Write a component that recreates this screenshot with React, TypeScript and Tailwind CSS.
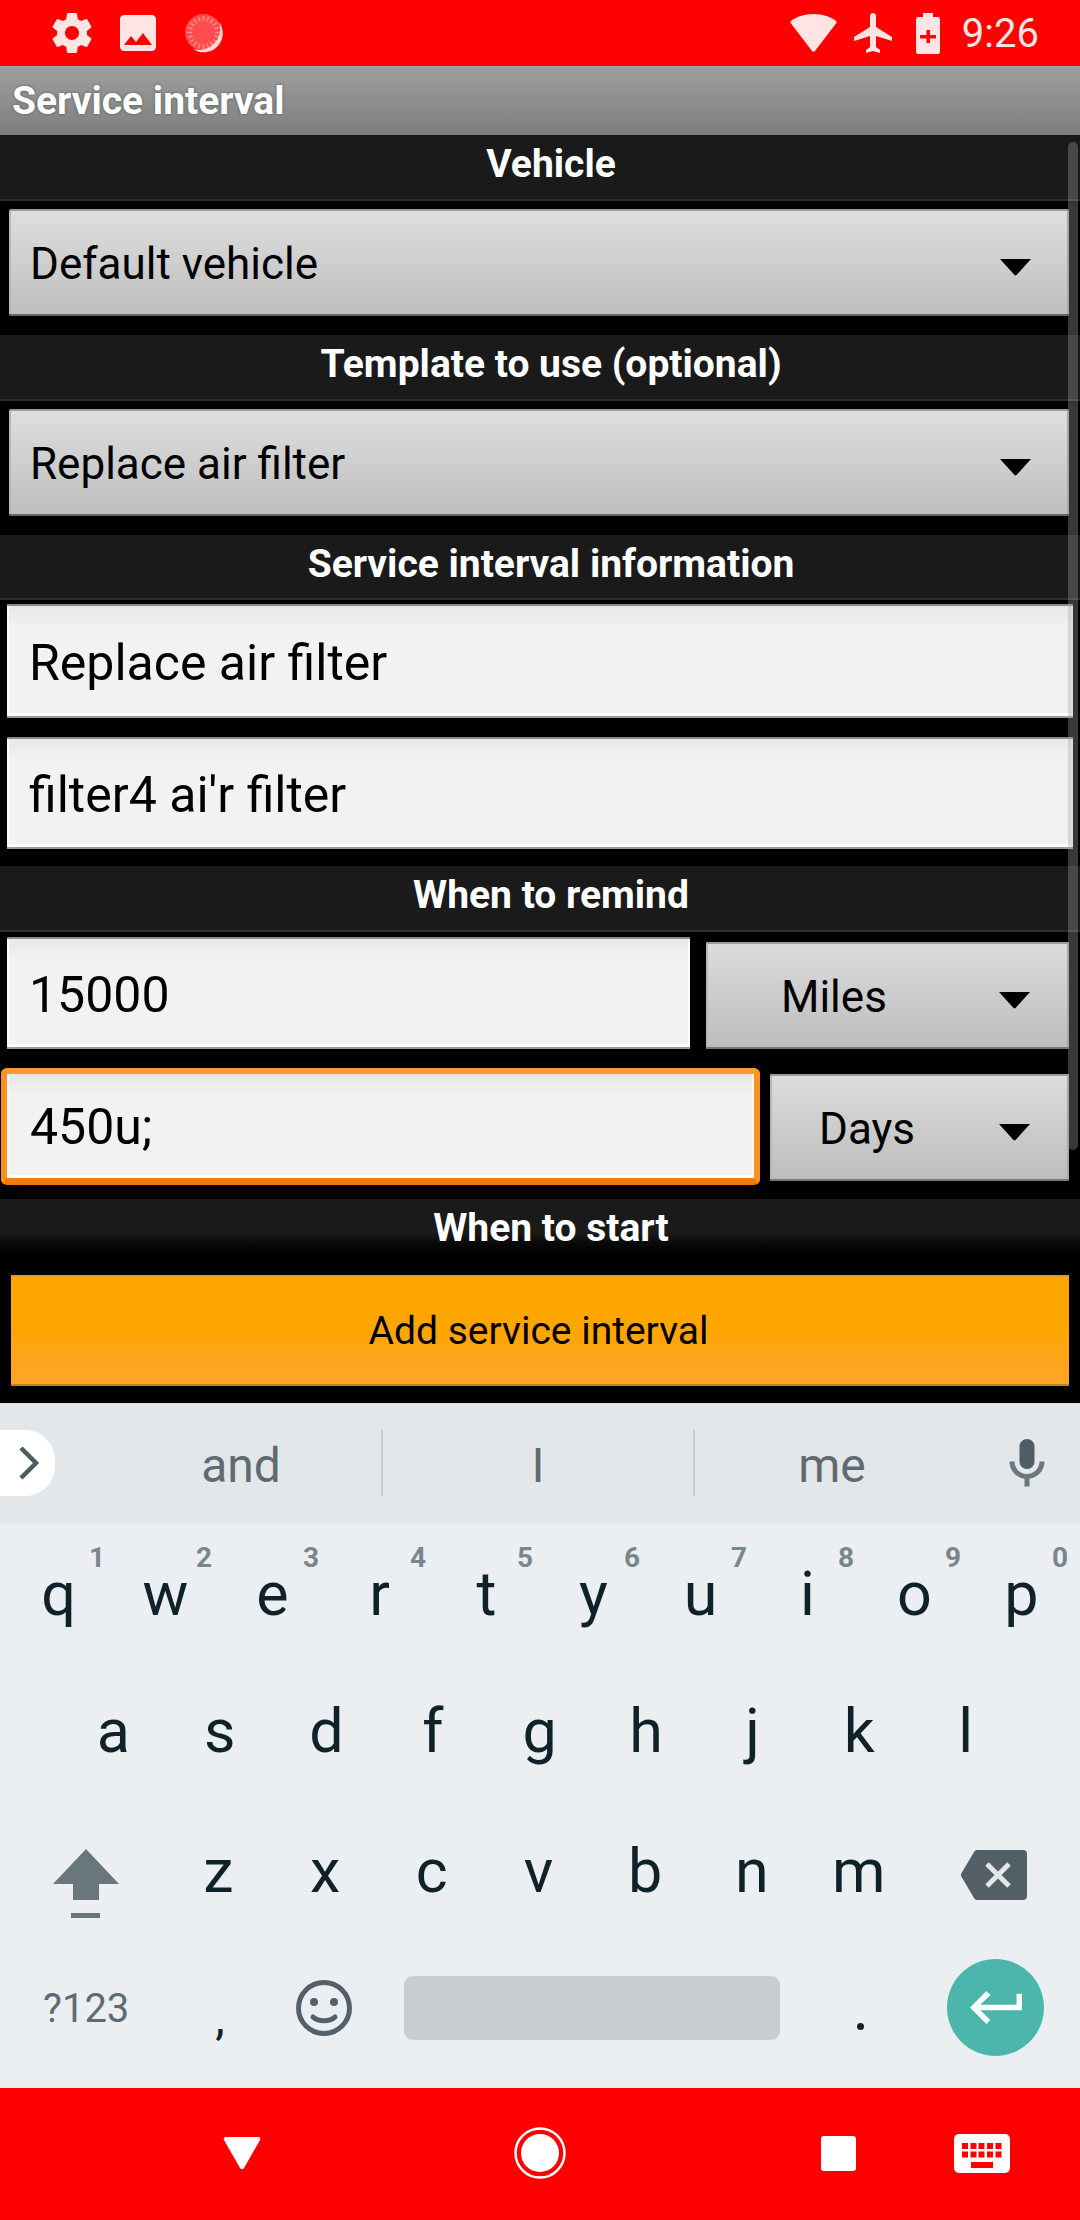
import React from "react";

const font = { fontFamily: "Roboto, sans-serif" };

function Arrow() {
  return (
    <svg width="33" height="18" viewBox="0 0 33 18" className="block shrink-0 mt-[6px]">
      <path d="M1 1h31L17.500 17a1.500 1.500 0 0 1-2 0z" fill="#000" />
    </svg>
  );
}

function Header({ title, h = "h-[66px]", extra = "" }: { title: string; h?: string; extra?: string }) {
  return (
    <div className={`${h} ${extra} w-full flex justify-center pl-[22px] pt-[8px] text-white font-bold text-[39px] leading-[42px]`}>
      {title}
    </div>
  );
}

function WideSelect({ label }: { label: string }) {
  return (
    <div className="ml-[9px] w-[1060px] h-[107px] flex items-center justify-between pl-[21px] pr-[37px] pt-[3px] text-[44px] text-black bg-gradient-to-b from-[#dedede] to-[#bfbfbf] border-y-2 border-t-[#9a9a9a] border-b-[#666666] rounded-[2px] shadow-[inset_-2px_0_0_#a8a8a8,inset_2px_0_0_#b8b8b8]">
      <span>{label}</span>
      <Arrow />
    </div>
  );
}

const inputCls =
  "flex items-center pl-[22px] pt-[4px] text-[50px] text-black bg-[linear-gradient(#e8e8e8,#f2f2f2_22px)] border-t-2 border-t-[#8a8a8a] border-b-2 border-b-[#9a9a9a] shadow-[inset_2px_0_0_#fbfbfb,inset_-2px_0_0_#fbfbfb,inset_0_-3px_0_#ffffff]";

function Input({ value, w, h = "h-[112px]" }: { value: string; w: string; h?: string }) {
  return <div className={`${w} ${h} ${inputCls}`}>{value}</div>;
}

function SmallSelect({ label, w, pl, h }: { label: string; w: string; pl: string; h: string }) {
  return (
    <div className={`${w} ${h} ${pl} flex items-center justify-between pr-[38px] pt-[3px] text-[44px] text-black bg-gradient-to-b from-[#dcdcdc] to-[#bdbdbd] border-y-2 border-t-[#9c9c9c] border-b-[#777777] shadow-[inset_-2px_0_0_#a8a8a8,inset_2px_0_0_#b8b8b8]`}>
      <span>{label}</span>
      <Arrow />
    </div>
  );
}

function Key({ k, n }: { k: string; n?: string }) {
  return (
    <div className="relative flex-1 flex justify-center text-[61px] leading-[70px] text-[#0f2129]">
      {k}
      {n && (
        <span className="absolute right-[7px] top-[-17px] text-[28px] leading-[32px] font-bold text-[#7a868d]">{n}</span>
      )}
    </div>
  );
}

const ticks = Array.from({ length: 20 }, (_, i) => (i * 360) / 20);

export default function App() {
  const row1 = ["q", "w", "e", "r", "t", "y", "u", "i", "o", "p"];
  const nums = ["1", "2", "3", "4", "5", "6", "7", "8", "9", "0"];
  return (
    <div style={font} className="relative w-[1080px] h-[2220px] overflow-hidden bg-black flex flex-col">
      {/* status bar */}
      <div className="h-[66px] bg-[#ff0000] flex items-center shrink-0 text-[#ffe4e4]">
        <svg width="48" height="48" viewBox="0 0 24 24" fill="currentColor" className="ml-[48px]">
          <path d="M19.43 12.98c.04-.32.07-.64.07-.98s-.03-.66-.07-.98l2.11-1.65c.19-.15.24-.42.12-.64l-2-3.46c-.12-.22-.39-.3-.61-.22l-2.49 1c-.52-.4-1.08-.73-1.69-.98l-.38-2.65C14.46 2.18 14.25 2 14 2h-4c-.25 0-.46.18-.49.42l-.38 2.65c-.61.25-1.17.59-1.69.98l-2.49-1c-.23-.09-.49 0-.61.22l-2 3.46c-.13.22-.07.49.12.64l2.11 1.65c-.04.32-.07.65-.07.98s.03.66.07.98l-2.11 1.65c-.19.15-.24.42-.12.64l2 3.46c.12.22.39.3.61.22l2.49-1c.52.4 1.08.73 1.69.98l.38 2.65c.03.24.24.42.49.42h4c.25 0 .46-.18.49-.42l.38-2.65c.61-.25 1.17-.59 1.69-.98l2.49 1c.23.09.49 0 .61-.22l2-3.46c.12-.22.07-.49-.12-.64l-2.11-1.65zM12 15.5c-1.93 0-3.5-1.57-3.5-3.5s1.57-3.5 3.5-3.5 3.5 1.57 3.5 3.5-1.57 3.5-3.5 3.5z" />
        </svg>
        <svg width="48" height="48" viewBox="0 0 24 24" fill="currentColor" className="ml-[18px]">
          <path d="M21 19V5c0-1.100-.9-2-2-2H5c-1.100 0-2 .9-2 2v14c0 1.100.9 2 2 2h14c1.100 0 2-.9 2-2zM8.500 13.500l2.500 3.010L14.500 12l4.500 6H5l3.500-4.500z" />
        </svg>
        <svg width="40" height="40" viewBox="0 0 40 40" className="ml-[22px]">
          <circle cx="19.5" cy="19.5" r="18.5" fill="#ff4d4d" />
          {ticks.map((a) => (
            <line key={a} x1="19.5" y1="3" x2="19.5" y2="8" stroke="#ff8f8f" strokeWidth="1.5" transform={`rotate(${a} 19.5 19.5)`} />
          ))}
          <path d="M35 9a19 19 0 0 1-26 27a21 21 0 0 0 26-27z" fill="#ffd6d6" />
        </svg>
        <div className="flex-1" />
        <svg width="47" height="38" viewBox="0 0 47 38" fill="currentColor">
          <path d="M23.5 0C33 0 41 3 46 7q1 1 0 2.500L25 37q-1.500 1.500-3 0L1 9.500Q0 8 1 7C6 3 14 0 23.500 0z" />
        </svg>
        <svg width="48" height="48" viewBox="0 0 24 24" fill="currentColor" className="ml-[13px]">
          <path d="M21 16v-2l-8-5V3.500c0-.83-.67-1.500-1.500-1.500S10 2.670 10 3.500V9l-8 5v2l8-2.500V19l-2 1.500V22l3.500-1 3.500 1v-1.500L13 19v-5.500l8 2.500z" />
        </svg>
        <svg width="24" height="41" viewBox="0 0 24 41" className="ml-[18px]">
          <path d="M7 0h10v4h5a2 2 0 0 1 2 2v33a2 2 0 0 1-2 2H2a2 2 0 0 1-2-2V6a2 2 0 0 1 2-2h5z" fill="currentColor" />
          <path d="M10.500 17h3.500v5h6v3.500h-6V30h-3.500v-4.500H4V22h6.500z" fill="#ff0000" />
        </svg>
        <span className="ml-[22px] mr-[41px] pt-[2px] text-[40px] leading-none">9:26</span>
      </div>

      {/* title bar */}
      <div className="h-[69px] shrink-0 pl-[12px] pt-[14px] bg-gradient-to-b from-[#a0a0a0] to-[#7e7e7e] text-white font-bold text-[39px] leading-[42px] [text-shadow:0_0_3px_#555]">
        Service interval
      </div>

      {/* form */}
      <div className="h-[1268px] shrink-0 flex flex-col">
        <Header title="Vehicle" extra="bg-[#1a1a1a] border-b-2 border-[#2e2e2e]" />
        <div className="mt-[8px]">
          <WideSelect label="Default vehicle" />
        </div>
        <div className="mt-[19px]">
          <Header title="Template to use (optional)" extra="bg-[#1a1a1a] border-b-2 border-[#2e2e2e]" />
        </div>
        <div className="mt-[8px]">
          <WideSelect label="Replace air filter" />
        </div>
        <div className="mt-[19px]">
          <Header title="Service interval information" h="h-[65px]" extra="bg-[#1a1a1a] border-b-2 border-[#2e2e2e]" />
        </div>
        <div className="mt-[4px] ml-[7px]">
          <Input value="Replace air filter" w="w-[1066px]" h="h-[114px]" />
        </div>
        <div className="mt-[19px] ml-[7px]">
          <Input value="filter4 ai'r filter" w="w-[1066px]" />
        </div>
        <div className="mt-[17px]">
          <Header title="When to remind" extra="bg-[#1a1a1a] border-b-2 border-[#2e2e2e]" />
        </div>
        <div className="mt-[5px] ml-[7px] flex items-end">
          <Input value="15000" w="w-[683px]" />
          <div className="ml-[16px]">
            <SmallSelect label="Miles" w="w-[363px]" pl="pl-[75px]" h="h-[107px]" />
          </div>
        </div>
        <div className="mt-[19px] ml-[1px] flex items-start">
          <div className="w-[759px] h-[117px] rounded-[6px] border-[6px] border-t-[#fb9a2c] border-x-[#fb9220] border-b-[#f07a0a] border-b-[7px]">
            <div className="h-full flex items-center pl-[23px] pt-[3px] text-[50px] text-black bg-[linear-gradient(#e6e6e6,#f2f2f2_20px)] shadow-[inset_2px_0_0_#fbfbfb,inset_-2px_0_0_#fbfbfb,inset_0_-3px_0_#ffffff]">
              450u;
            </div>
          </div>
          <div className="ml-[10px] mt-[6px]">
            <SmallSelect label="Days" w="w-[299px]" pl="pl-[49px]" h="h-[107px]" />
          </div>
        </div>
        <div className="mt-[14px]">
          <Header title="When to start" extra="bg-gradient-to-b from-[#1a1a1a] from-50% to-[#000000]" />
        </div>
        <div className="mt-[10px] ml-[11px] w-[1058px] h-[111px] flex items-center justify-center pr-[3px] pt-[1px] text-[39px] text-black bg-gradient-to-b from-[#ffa500] from-50% to-[#fca626] border-y-2 border-t-[#e89a10] border-b-[#c8801a]">
          Add service interval
        </div>
      </div>

      {/* scrollbar */}
      <div className="absolute left-[1068px] top-[142px] w-[10px] h-[1008px] rounded-[5px] bg-[#a0a0a0]/35" />

      {/* suggestions */}
      <div className="h-[121px] shrink-0 bg-[#e3e7ea] flex items-start pt-[27px] text-[48px] leading-[72px] text-[#5f6b73]">
        <div className="w-[55px] h-[66px] shrink-0 bg-white rounded-r-[30px] flex items-center">
          <svg width="24" height="36" viewBox="0 0 24 36" className="ml-[17px]">
            <path d="M4 3l15 15L4 33" fill="none" stroke="#4c5a62" strokeWidth="4.500" />
          </svg>
        </div>
        <div className="w-[46px] shrink-0" />
        <div className="w-[280px] text-center">and</div>
        <div className="w-[2px] h-[66px] bg-[#c6cbce]" />
        <div className="w-[310px] text-center">I</div>
        <div className="w-[2px] h-[66px] bg-[#c6cbce]" />
        <div className="w-[274px] text-center">me</div>
        <svg width="60" height="60" viewBox="0 0 24 24" className="mt-[4px] ml-[28px]">
          <path d="M12 14c1.660 0 3-1.340 3-3V5c0-1.660-1.340-3-3-3S9 3.340 9 5v6c0 1.660 1.340 3 3 3z" fill="#4f5d66" />
          <path d="M17 11c0 2.760-2.240 5-5 5s-5-2.240-5-5H5c0 3.530 2.610 6.430 6 6.920V21h2v-3.080c3.390-.49 6-3.390 6-6.920h-2z" fill="#6b777e" />
        </svg>
      </div>

      {/* keyboard */}
      <div className="h-[564px] shrink-0 bg-[#eceff1] flex flex-col">
        <div className="flex px-[5px] mt-[35px] h-[70px]">
          {row1.map((k, i) => (
            <Key key={k} k={k} n={nums[i]} />
          ))}
        </div>
        <div className="flex pl-[60px] pr-[61px] mt-[67px] h-[70px]">
          {["a", "s", "d", "f", "g", "h", "j", "k", "l"].map((k) => (
            <Key key={k} k={k} />
          ))}
        </div>
        <div className="flex items-start pl-[53px] mt-[70px] h-[70px]">
          <svg width="66" height="69" viewBox="0 0 66 69" className="mt-[13px]">
            <path d="M33 0l33 35H46v16H20V35H0z" fill="#69767c" />
            <rect x="18" y="64" width="29" height="5" fill="#69767c" />
          </svg>
          <div className="flex w-[747px] ml-[46px]">
            {["z", "x", "c", "v", "b", "n", "m"].map((k) => (
              <Key key={k} k={k} />
            ))}
          </div>
          <svg width="66" height="50" viewBox="0 0 66 50" className="ml-[49px] mt-[14px]">
            <path d="M16 0h46a4 4 0 0 1 4 4v42a4 4 0 0 1-4 4H16a4 4 0 0 1-3-2L0 26a2 2 0 0 1 0-2L13 2a4 4 0 0 1 3-2z" fill="#525f67" />
            <path d="M26 14l22 22M48 14L26 36" stroke="#e4e7e9" strokeWidth="5" />
          </svg>
        </div>
        <div className="flex items-center pl-[43px] mt-[53px] h-[97px]">
          <span className="w-[86px] whitespace-nowrap pt-[3px] text-[40px] leading-none text-[#5f6b73]">?123</span>
          <span className="w-[60px] ml-[61px] text-center text-[48px] leading-none text-[#0f2129] mt-[20px]">,</span>
          <svg width="56" height="56" viewBox="0 0 56 56" className="ml-[46px]">
            <circle cx="28" cy="28" r="25.500" fill="none" stroke="#546069" strokeWidth="5" />
            <circle cx="18" cy="22" r="4" fill="#546069" />
            <circle cx="38" cy="22" r="4" fill="#546069" />
            <path d="M17 37c6 5 16 5 22 0" fill="none" stroke="#546069" strokeWidth="5" strokeLinecap="round" />
          </svg>
          <div className="ml-[52px] w-[376px] h-[64px] rounded-[9px] bg-[#c9cdd0]" />
          <span className="ml-[74px] w-[12px] h-[7px] mt-[37px] flex justify-center">
            <span className="block w-[7px] h-[7px] rounded-full bg-[#0f2129]" />
          </span>
          <div className="ml-[81px] w-[97px] h-[97px] rounded-full bg-[#4db6ac] flex items-center justify-center">
            <svg width="52" height="33" viewBox="2 6 19 12" fill="#ffffff">
              <path d="M19 7v4H5.830l3.580-3.590L8 6l-6 6 6 6 1.410-1.410L5.830 13H21V7z" />
            </svg>
          </div>
        </div>
      </div>

      {/* nav bar */}
      <div className="h-[132px] shrink-0 bg-[#ff0000] flex items-center">
        <svg width="38" height="34" viewBox="0 0 38 34" className="ml-[223px] mt-[-2px]">
          <path d="M3 1h32a2 2 0 0 1 2 3L21 32a2.300 2.300 0 0 1-4 0L1 4a2 2 0 0 1 2-3z" fill="#fff" />
        </svg>
        <svg width="52" height="52" viewBox="0 0 52 52" className="ml-[253px] mt-[-2px]">
          <circle cx="26" cy="26" r="24.500" fill="none" stroke="#fff" strokeWidth="2.500" />
          <circle cx="26" cy="26" r="19" fill="#fff" />
        </svg>
        <div className="ml-[255px] mt-[-2px] w-[35px] h-[35px] rounded-[3px] bg-white" />
        <svg width="56" height="39" viewBox="0 0 56 39" className="ml-[98px] mt-[-2px]">
          <rect width="56" height="39" rx="5" fill="#fff" />
          {[8, 16.500, 24.500, 33, 41.500].map((x) => (
            <g key={x} fill="#ff0000">
              <rect x={x} y="9" width="6" height="6" />
              <rect x={x} y="17.500" width="6" height="6" />
            </g>
          ))}
          <rect x="17" y="28" width="22" height="6" fill="#ff0000" />
        </svg>
      </div>
    </div>
  );
}
